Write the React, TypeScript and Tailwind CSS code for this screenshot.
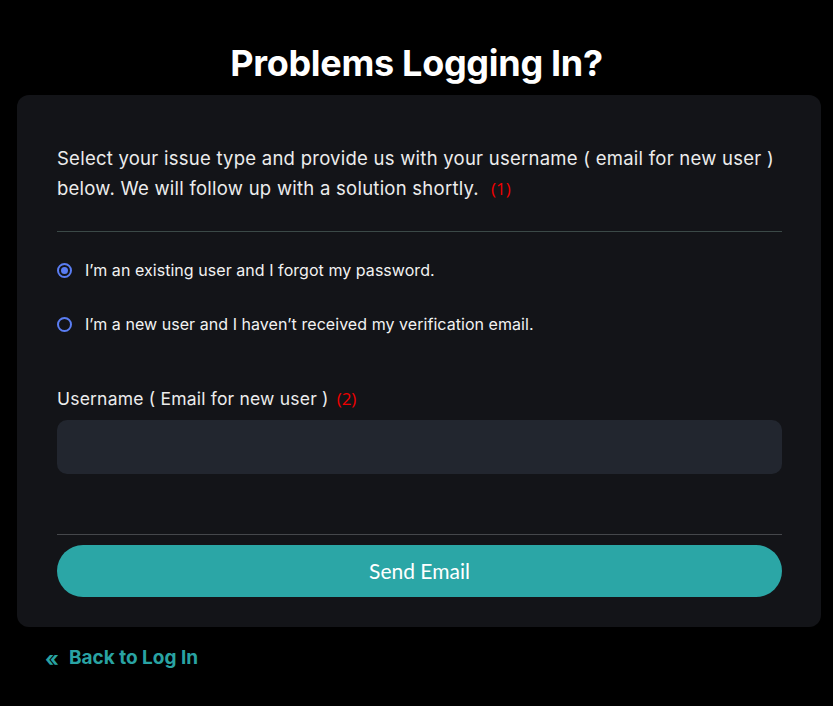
import { useState } from 'react';

const OPTIONS = [
  { id: 'existing', label: 'I’m an existing user and I forgot my password.' },
  { id: 'new', label: 'I’m a new user and I haven’t received my verification email.' },
];

export default function App() {
  const [issue, setIssue] = useState('existing');
  const [username, setUsername] = useState('');

  return (
    <div className="min-h-[706px] bg-black text-white font-['Inter',sans-serif] pt-[38px] pb-8">
      <h1 className="text-center text-[36px] leading-[50px] font-bold tracking-[-0.3px] mb-[7px]">
        Problems Logging In?
      </h1>

      {/* Card */}
      <div className="ml-[17px] mr-[12px] rounded-xl bg-[#131418] pl-10 pr-[39px] pt-[48px] pb-[30px]">
        <p className="text-[18.5px] leading-[30px] tracking-[0.25px] text-[#ececec]">
          Select your issue type and provide us with your username ( email for new user ) below. We
          will follow up with a solution shortly.
          <span className="ml-3 inline-block font-['Open_Sans',sans-serif] text-[17px] leading-[30px] font-medium tracking-normal text-[#f00000]">
            (1)
          </span>
        </p>

        <div className="mt-[27px] h-px bg-[#3b4947]" />

        <div className="mt-[26px] flex flex-col gap-[30px]">
          {OPTIONS.map((opt) => (
            <label key={opt.id} className="flex items-center gap-[13px] h-6 cursor-pointer">
              <span className="flex h-[15px] w-[15px] items-center justify-center rounded-full border-2 border-[#5a7df2]">
                {issue === opt.id && <span className="h-[7px] w-[7px] rounded-full bg-[#5a7df2]" />}
              </span>
              <input
                type="radio"
                name="issue"
                className="hidden"
                checked={issue === opt.id}
                onChange={() => setIssue(opt.id)}
              />
              <span className="text-[16px] tracking-[0.05px] text-[#f2f2f2]">{opt.label}</span>
            </label>
          ))}
        </div>

        <div className="mt-[51px] flex items-center text-[17.5px] leading-[24px] tracking-[0.2px] text-[#ececec]">
          Username ( Email for new user )
          <span className="ml-2 font-['Open_Sans',sans-serif] text-[17px] font-medium tracking-normal text-[#f00000]">(2)</span>
        </div>
        <input
          value={username}
          onChange={(e) => setUsername(e.target.value)}
          className="mt-[9px] block h-[54px] w-full rounded-[10px] bg-[#22262f] px-4 text-white outline-none"
        />

        <div className="mt-[60px] h-px bg-[#45474b]" />

        <button className="mt-[10px] h-[52px] w-full rounded-full bg-[#2ba6a6] font-['Lato',sans-serif] text-[21px] text-white">
          Send Email
        </button>
      </div>

      <a href="#" className="mt-[17px] ml-[45px] inline-flex items-center gap-[10px] text-[19px] font-bold text-[#29a3a3]">
        <span className="text-[21px] leading-none">«</span>
        Back to Log In
      </a>
    </div>
  );
}
